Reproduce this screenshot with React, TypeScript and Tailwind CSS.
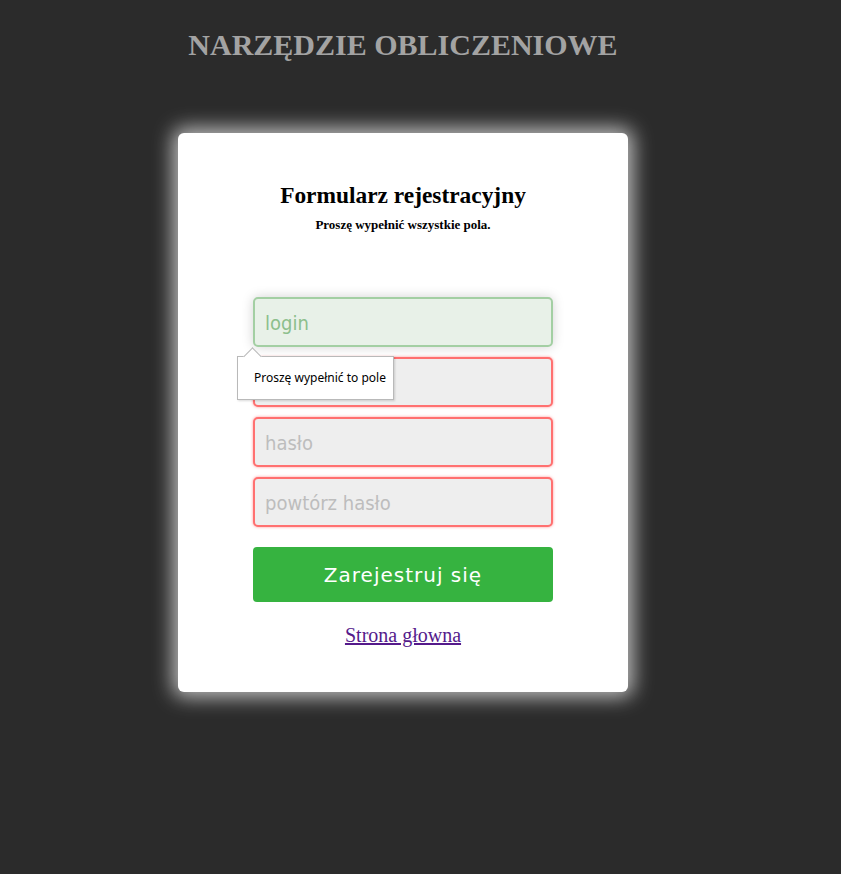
import React from "react";

const inputBase =
  "block w-[300px] h-[50px] rounded-[5px] border-2 px-[10px] pt-[2px] text-[20px] outline-none [font-family:'DejaVu_Sans_Condensed','DejaVu_Sans',Tahoma,sans-serif]";
const invalid = "border-[#ff7070] bg-[#eeeeee] shadow-[0_0_3px_rgba(255,80,80,0.6)] placeholder:text-[#bdbdbd]";

export default function App() {
  return (
    <div className="min-h-[874px] w-full bg-[#2b2b2b] [font-family:'Liberation_Serif','Times_New_Roman',serif]">
      <div className="flex w-[806px] flex-col items-center">
        <h1 className="mt-[27px] text-[30px] font-bold leading-[36px] text-[#a3a3a3]">NARZĘDZIE OBLICZENIOWE</h1>

        <div className="mt-[70px] flex w-[450px] flex-col items-center rounded-[6px] bg-white pt-[44px] pb-[44px] shadow-[0_0_20px_5px_rgba(255,255,255,0.7)]">
          <h2 className="text-[23.4px] font-bold leading-[36px] text-black">Formularz rejestracyjny</h2>
          <p className="mt-[4px] text-[13px] font-bold leading-[16px] text-black">Proszę wypełnić wszystkie pola.</p>

          <form className="relative mt-[64px] flex flex-col items-center gap-[10px]" onSubmit={(e) => e.preventDefault()}>
            <input
              type="text"
              placeholder="login"
              autoFocus
              className={`${inputBase} border-[#a3cfa3] bg-[#e8f1e8] shadow-[0_0_12px_rgba(0,0,0,0.18)] caret-[#2b7a2b] placeholder:text-[#8cbf8c]`}
            />
            <input type="email" placeholder="e-mail" className={`${inputBase} ${invalid}`} />
            <input type="password" placeholder="hasło" className={`${inputBase} ${invalid}`} />
            <input type="password" placeholder="powtórz hasło" className={`${inputBase} ${invalid}`} />

            {/* tooltip walidacji */}
            <div className="absolute left-[-16px] top-[59px] z-10 flex h-[44px] w-[157px] items-center border border-[#b9b9b9] bg-white pl-[16px] text-[12px] text-black shadow-[1px_1px_2px_rgba(0,0,0,0.15)] [font-family:'Noto_Sans','Open_Sans',sans-serif]">
              <span className="absolute left-[8px] top-[-7px] h-[13px] w-[13px] rotate-45 border-l border-t border-[#b9b9b9] bg-white"></span>
              <span className="relative">Proszę wypełnić to pole</span>
            </div>

            <button
              type="submit"
              className="mt-[10px] h-[55px] w-[300px] rounded-[4px] bg-[#36b340] text-[20px] tracking-[1px] text-white [font-family:'DejaVu_Sans',Verdana,sans-serif]"
            >
              Zarejestruj się
            </button>
          </form>

          <a href="#" className="mt-[20px] text-[20px] leading-[26px] text-[#551a8b] underline">
            Strona głowna
          </a>
        </div>
      </div>
    </div>
  );
}
